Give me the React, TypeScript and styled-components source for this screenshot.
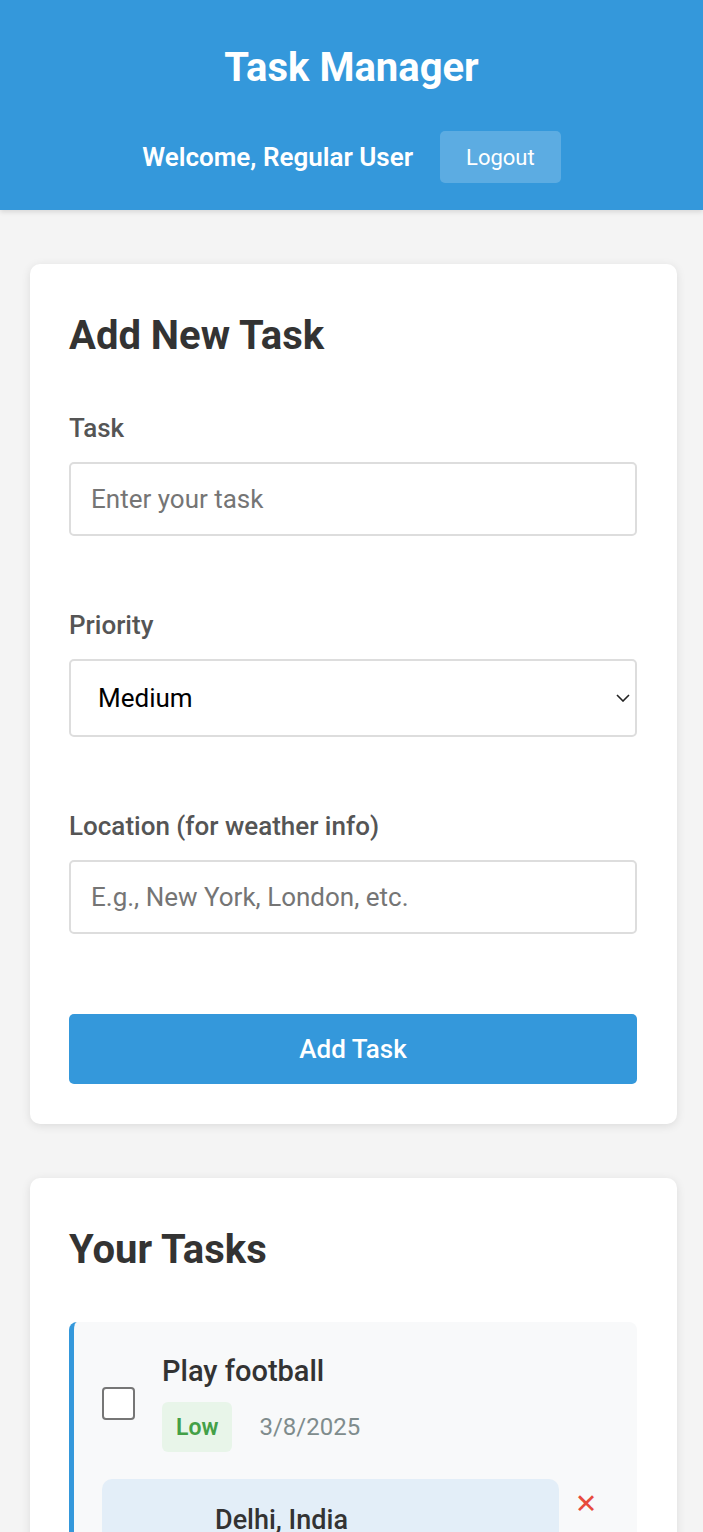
import React from "react";
import styled, { createGlobalStyle } from "styled-components";

const GlobalStyle = createGlobalStyle`
  * { box-sizing: border-box; }
  html, body { margin: 0; padding: 0; }
  body {
    background: #f4f4f4;
    font-family: Roboto, "Noto Sans", "Liberation Sans", sans-serif;
    color: #333;
  }
`;

const Header = styled.header`
  background: #3498db;
  color: #fff;
  padding: 44px 20px 27px;
  box-shadow: 0 2px 5px rgba(0, 0, 0, 0.12);
  display: flex;
  flex-direction: column;
  align-items: center;
  gap: 40px;
`;

const Title = styled.h1`
  margin: 0;
  font-size: 40px;
  line-height: 47px;
  font-weight: 700;
`;

const UserInfo = styled.div`
  display: flex;
  align-items: center;
  gap: 27px;
`;

const Welcome = styled.span`
  font-size: 26px;
  font-weight: 600;
`;

const LogoutButton = styled.button`
  height: 52px;
  padding: 0 26px;
  border: none;
  border-radius: 5px;
  background: rgba(255, 255, 255, 0.2);
  color: #fff;
  font-family: inherit;
  font-size: 22px;
  cursor: pointer;
`;

const Container = styled.main`
  padding: 54px 26px 40px 30px;
  display: flex;
  flex-direction: column;
  gap: 54px;
`;

const Card = styled.section`
  background: #fff;
  border-radius: 10px;
  box-shadow: 0 2px 10px rgba(0, 0, 0, 0.1);
  padding: 40px 40px 40px 39px;
`;

const CardTitle = styled.h2`
  margin: 9px 0 0;
  font-size: 40px;
  line-height: 46px;
  font-weight: 700;
  color: #333;
`;

const Form = styled.form`
  margin-top: 54px;
  display: flex;
  flex-direction: column;
  gap: 74px;
`;

const FormGroup = styled.div`
  display: flex;
  flex-direction: column;
  gap: 19px;
`;

const Label = styled.label`
  font-size: 26px;
  line-height: 30px;
  font-weight: 500;
  color: #555;
`;

const TextInput = styled.input`
  width: 100%;
  padding: 20px;
  border: 2px solid #ddd;
  border-radius: 5px;
  font-family: inherit;
  font-size: 26px;
  line-height: 30px;
  height: 74px;
  color: #333;
  background: #fff;
  &::placeholder { color: #757575; }
`;

const SelectWrap = styled.div`
  position: relative;
`;

const Select = styled.select`
  width: 100%;
  height: 78px;
  padding: 0 40px 0 27px;
  border: 2px solid #ddd;
  border-radius: 5px;
  font-family: inherit;
  font-size: 26px;
  color: #000;
  background: #fff;
  appearance: none;
  -webkit-appearance: none;
`;

const SelectChevron = styled.svg`
  position: absolute;
  right: 7px;
  top: 50%;
  width: 14px;
  height: 8px;
  margin-top: -4px;
  pointer-events: none;
`;

const SubmitButton = styled.button`
  margin-top: 6px;
  height: 70px;
  width: 100%;
  border: none;
  border-radius: 5px;
  background: #3498db;
  color: #fff;
  font-family: inherit;
  font-size: 26px;
  font-weight: 500;
  cursor: pointer;
`;

const TaskList = styled.ul`
  list-style: none;
  margin: 49px 0 0;
  padding: 0;
`;

const TaskItem = styled.li<{ $accent: string }>`
  background: #f8f9fa;
  border-left: 5px solid ${(p) => p.$accent};
  border-radius: 8px;
  padding: 32px 28px 28px 28px;
  display: flex;
  flex-direction: column;
  gap: 27px;
`;

const TaskMain = styled.div`
  display: flex;
  align-items: center;
  gap: 27px;
`;

const Checkbox = styled.input`
  appearance: none;
  -webkit-appearance: none;
  width: 33px;
  height: 33px;
  margin: 0;
  flex-shrink: 0;
  border: 2px solid #767676;
  border-radius: 4px;
  background: #fff;
  cursor: pointer;
`;

const TaskContent = styled.div`
  display: flex;
  flex-direction: column;
  gap: 14px;
`;

const TaskTitle = styled.span`
  font-size: 29px;
  line-height: 34px;
  font-weight: 500;
  color: #333;
`;

const TaskMeta = styled.div`
  display: flex;
  align-items: center;
  gap: 27px;
`;

const PriorityBadge = styled.span<{ $bg: string; $fg: string }>`
  height: 50px;
  display: inline-flex;
  align-items: center;
  padding: 0 14px;
  border-radius: 6px;
  background: ${(p) => p.$bg};
  color: ${(p) => p.$fg};
  font-size: 23px;
  font-weight: 600;
`;

const TaskDate = styled.span`
  font-size: 24px;
  color: #7f8c8d;
`;

const TaskFooter = styled.div`
  display: flex;
  align-items: flex-start;
  gap: 4px;
`;

const WeatherBox = styled.div`
  flex: 1;
  background: #e3eef8;
  border-radius: 10px;
  padding: 26px 20px 24px;
  display: flex;
  gap: 20px;
`;

const WeatherIconSlot = styled.div`
  width: 73px;
  flex-shrink: 0;
`;

const WeatherInfo = styled.div`
  display: flex;
  flex-direction: column;
  gap: 8px;
`;

const City = styled.span`
  font-size: 27px;
  line-height: 30px;
  font-weight: 500;
  color: #333;
`;

const WeatherLine = styled.span`
  font-size: 22px;
  color: #555;
`;

const DeleteButton = styled.button`
  margin-top: 10px;
  width: 46px;
  border: none;
  background: none;
  color: #e74c3c;
  font-family: "DejaVu Sans", sans-serif;
  font-size: 27px;
  line-height: 30px;
  font-weight: 700;
  padding: 0;
  cursor: pointer;
`;

export default function App() {
  return (
    <>
      <GlobalStyle />
      <Header>
        <Title>Task Manager</Title>
        <UserInfo>
          <Welcome>Welcome, Regular User</Welcome>
          <LogoutButton>Logout</LogoutButton>
        </UserInfo>
      </Header>
      <Container>
        <Card>
          <CardTitle>Add New Task</CardTitle>
          <Form onSubmit={(e) => e.preventDefault()}>
            <FormGroup>
              <Label htmlFor="task">Task</Label>
              <TextInput id="task" placeholder="Enter your task" />
            </FormGroup>
            <FormGroup>
              <Label htmlFor="priority">Priority</Label>
              <SelectWrap>
                <Select id="priority" defaultValue="medium">
                  <option value="low">Low</option>
                  <option value="medium">Medium</option>
                  <option value="high">High</option>
                </Select>
                <SelectChevron viewBox="0 0 14 8" fill="none">
                  <path d="M1 1 L7 7 L13 1" stroke="#222" strokeWidth="1.6" />
                </SelectChevron>
              </SelectWrap>
            </FormGroup>
            <FormGroup>
              <Label htmlFor="location">Location (for weather info)</Label>
              <TextInput id="location" placeholder="E.g., New York, London, etc." />
            </FormGroup>
            <SubmitButton type="submit">Add Task</SubmitButton>
          </Form>
        </Card>
        <Card>
          <CardTitle>Your Tasks</CardTitle>
          <TaskList>
            <TaskItem $accent="#3498db">
              <TaskMain>
                <Checkbox type="checkbox" />
                <TaskContent>
                  <TaskTitle>Play football</TaskTitle>
                  <TaskMeta>
                    <PriorityBadge $bg="#e8f5e9" $fg="#43a047">Low</PriorityBadge>
                    <TaskDate>3/8/2025</TaskDate>
                  </TaskMeta>
                </TaskContent>
              </TaskMain>
              <TaskFooter>
                <WeatherBox>
                  <WeatherIconSlot />
                  <WeatherInfo>
                    <City>Delhi, India</City>
                    <WeatherLine>24°C</WeatherLine>
                    <WeatherLine>clear sky</WeatherLine>
                  </WeatherInfo>
                </WeatherBox>
                <DeleteButton aria-label="Delete task">✕</DeleteButton>
              </TaskFooter>
            </TaskItem>
          </TaskList>
        </Card>
      </Container>
    </>
  );
}
